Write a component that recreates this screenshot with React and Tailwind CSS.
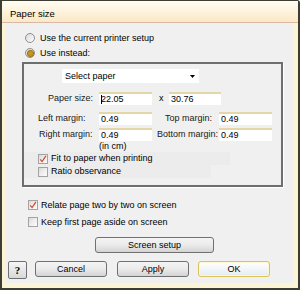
import React from "react";

const Check = ({ checked }) => (
  <span className="w-[10px] h-[10px] shrink-0 border border-[#a3a3a3] bg-linear-to-br from-[#d9d9d9] via-[#eeeeee] to-[#fbfbfb] flex items-center justify-center">
    {checked && (
      <svg width="8" height="8" viewBox="0 0 8 8">
        <path d="M1.2 4.4 L3.1 6.6 L6.9 0.8" stroke="#d4472c" strokeWidth="1.2" fill="none" />
      </svg>
    )}
  </span>
);

const Radio = ({ selected }) => (
  <span className="w-[10px] h-[10px] shrink-0 rounded-full border border-[#8e8e8e] bg-linear-to-br from-[#dcdcdc] to-[#fbfbfb] flex items-center justify-center">
    {selected && <span className="w-[5px] h-[5px] rounded-full bg-[#c8951c] ring-1 ring-[#9a7416]" />}
  </span>
);

const Field = ({ value, w = "w-[53px]", caret }) => (
  <div className={`${w} h-[13px] bg-white border-t-2 border-[#e4d6a6] flex items-center pl-[2px] text-[9px] leading-none`}>
    {caret && <span className="w-px h-[9px] bg-black -mr-px" />}
    {value}
  </div>
);

const Btn = ({ children, w = "w-[72px]", h = "h-[16px]" }) => (
  <div className={`${w} ${h} shrink-0 rounded-[3px] border border-[#707070] bg-linear-to-b from-[#f4f4f4] via-[#ebebeb] to-[#d4d4d4] flex items-center justify-center text-[9px] leading-none`}>
    {children}
  </div>
);

export default function App() {
  return (
    <div className="w-[300px] h-[290px] border-x-2 border-b-2 border-t border-[#3e3d33] bg-[#fbf5d6] flex flex-col font-['Liberation_Sans',Arial,sans-serif] text-black text-[9px] leading-none rounded-tr-[3px]">
      <div className="h-[21px] shrink-0 bg-linear-to-b from-[#fffdf3] to-[#fbe8c6] flex items-center pl-[8px] pt-[5px] text-[9.5px]">
        Paper size
      </div>
      <div className="h-px shrink-0 bg-[#d9b9a6]" />
      <div className="ml-[3px] mr-[5px] h-[260px] bg-[#f0f0f0] flex flex-col">
        <div className="mt-[8px] h-[14px] flex items-center pl-[20px] gap-[5px]">
          <Radio />
          <span>Use the current printer setup</span>
        </div>
        <div className="mt-px h-[14px] flex items-center pl-[20px] gap-[5px]">
          <Radio selected />
          <span>Use instead:</span>
        </div>
        <div className="mt-[2px] ml-[17px] w-[261px] h-[125px] border-2 border-[#6e6e6e] shadow-[1px_1px_0_#ffffff] flex flex-col">
          <div className="mt-[5px] ml-[38px] w-[137px] h-[14px] bg-white flex items-center justify-between pl-[3px] pr-[4px]">
            <span>Select paper</span>
            <svg width="5" height="3" viewBox="0 0 5 3"><path d="M0 0 H5 L2.5 3 Z" fill="#000" /></svg>
          </div>
          <div className="mt-[9px] h-[13px] flex items-center">
            <span className="ml-[24px] w-[51px] text-[#1a1a1a]">Paper size:</span>
            <Field value="22.05" caret />
            <span className="ml-[7px] w-[10px]">x</span>
            <Field value="30.76" w="w-[52px]" />
          </div>
          <div className="mt-[7px] h-[13px] flex items-center">
            <span className="ml-[14px] w-[61px] text-[#1a1a1a]">Left margin:</span>
            <Field value="0.49" />
            <span className="ml-[13px] w-[54px] text-[#1a1a1a]">Top margin:</span>
            <Field value="0.49" />
          </div>
          <div className="mt-[3px] h-[13px] flex items-center">
            <span className="ml-[15px] w-[60px] text-[#1a1a1a]">Right margin:</span>
            <Field value="0.49" />
            <span className="ml-[5px] w-[62px] text-[#1a1a1a]">Bottom margin:</span>
            <Field value="0.49" />
          </div>
          <div className="h-[11px] flex items-center pl-[75px]">(in cm)</div>
          <div className="h-[13px] flex items-center pl-[14px] gap-[3px] w-[206px] bg-[#ececec]">
            <Check checked />
            <span>Fit to paper when printing</span>
          </div>
          <div className="h-[13px] flex items-center pl-[14px] gap-[3px] w-[187px] bg-[#ececec]">
            <Check />
            <span>Ratio observance</span>
          </div>
        </div>
        <div className="mt-[11px] h-[14px] flex items-center pl-[23px] gap-[3px]">
          <Check checked />
          <span>Relate page two by two on screen</span>
        </div>
        <div className="mt-[3px] h-[14px] flex items-center pl-[23px] gap-[3px]">
          <Check />
          <span>Keep first page aside on screen</span>
        </div>
        <div className="mt-[8px] ml-[90px]">
          <Btn w="w-[119px]">Screen setup</Btn>
        </div>
        <div className="mt-[8px] flex items-start pl-[3px]">
          <div className="w-[19px] h-[18px] shrink-0 rounded-[2px] border border-[#707070] bg-linear-to-b from-[#f6f6f6] to-[#d8d8d8] flex items-center justify-center font-['Liberation_Serif',serif] font-bold text-[11px]">
            ?
          </div>
          <div className="ml-[8px]"><Btn>Cancel</Btn></div>
          <div className="ml-[10px]"><Btn>Apply</Btn></div>
          <div className="ml-[9px] w-[72px] h-[16px] rounded-[3px] border border-[#dcc25a] bg-linear-to-b from-[#fefefe] via-[#f2f6f8] to-[#e4ecf0] shadow-[inset_0_0_0_1px_#fff7d0] flex items-center justify-center text-[9px]">
            OK
          </div>
        </div>
      </div>
    </div>
  );
}
